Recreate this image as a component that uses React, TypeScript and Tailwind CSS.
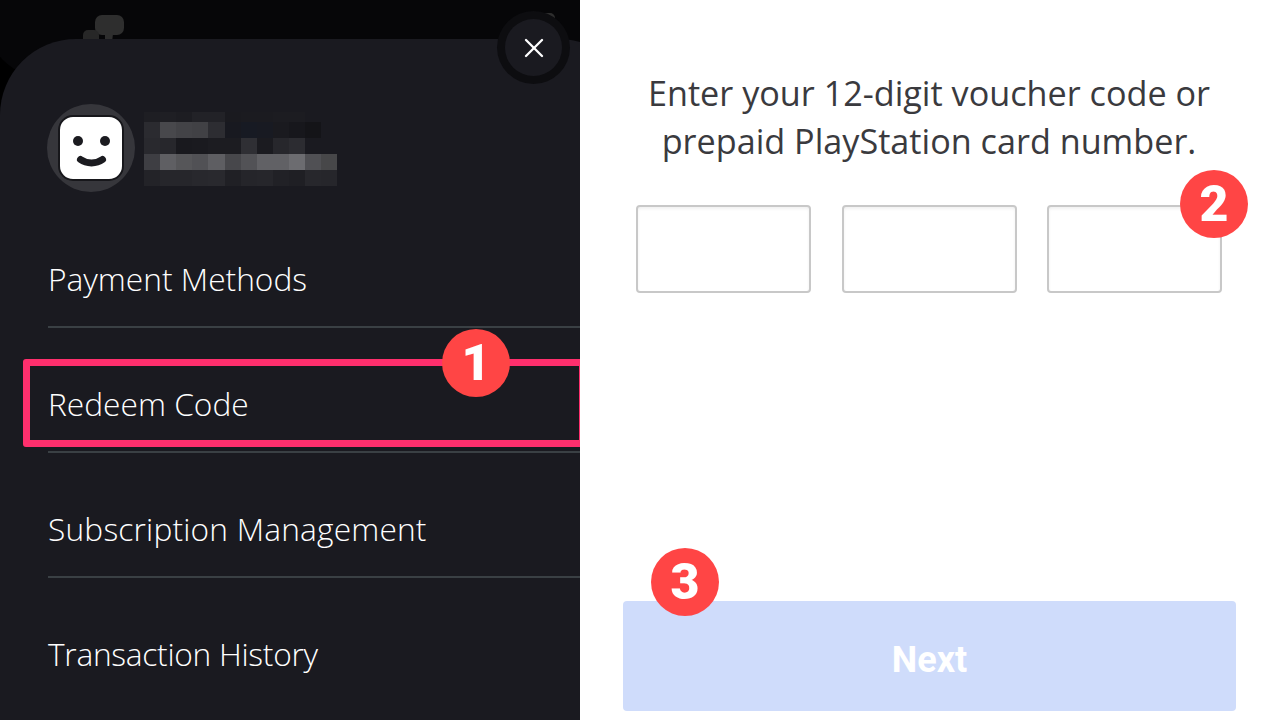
import { X } from 'lucide-react';

const mosaic = [
  ['#1e1e23', '#1f1f24', '#1d1d22', '#222227', '#222227', '#1a1a1f', '#1b1b20', '#1b1b20', '#1c1c21', '#1c1c21', '#1a1a20', '#1a1a20'],
  ['#2b2b30', '#48484c', '#434347', '#414145', '#2d2d32', '#181920', '#171a23', '#181a22', '#1a1a1f', '#17171c', '#141418', '#1a1a20'],
  ['#29292e', '#27272c', '#19191e', '#1a1a1f', '#1c1c21', '#1c1c21', '#2f2f34', '#1b1b20', '#27272c', '#2c2c31', '#1a1a20', '#1a1a20'],
  ['#3e3e43', '#5f5f63', '#565659', '#515155', '#5e5e62', '#47474b', '#525256', '#616165', '#616165', '#6c6c70', '#505054', '#474749'],
  ['#232328', '#26262b', '#26262b', '#28282d', '#29292e', '#202025', '#25252a', '#26262b', '#212126', '#1f1f24', '#27272c', '#26262b'],
];

function Badge({ n, className }: { n: number; className: string }) {
  return (
    <div className={`absolute w-[68px] h-[68px] rounded-full bg-[#ff4545] text-white flex items-center justify-center font-['Roboto',sans-serif] font-black text-[50px] leading-none ${className}`}>
      {n}
    </div>
  );
}

function MenuItem({ label, divider = true, className = '' }: { label: string; divider?: boolean; className?: string }) {
  return (
    <div className={`h-[125px] flex items-center ml-[48px] pt-[29px] text-[31.7px] font-light text-white ${divider ? 'border-b-2 border-[#3a4044]' : ''} ${className}`}>
      {label}
    </div>
  );
}

export default function App() {
  return (
    <div className="w-[1280px] h-[720px] flex overflow-hidden bg-white font-['Open_Sans',sans-serif]">
      <div className="relative w-[580px] h-full bg-black overflow-hidden pt-[39px]">
        {/* things peeking out behind the sheet */}
        <div className="absolute -left-[18px] -top-[60px] w-[700px] h-[140px] rounded-bl-[70px] bg-[#060608]" />
        <svg className="absolute left-[78px] top-[12px]" width="50" height="30" viewBox="0 0 50 30" fill="#2e2e2e">
          <rect x="17" y="3" width="29" height="20" rx="7" />
          <rect x="5" y="18" width="16" height="14" rx="5" fill="#272727" />
          <path d="M27 22h8l-1 8h-7z" />
        </svg>
        <div className="absolute left-[532px] top-[13px] w-[23px] h-[26px] rounded-[5px] bg-[#2e2e2e]" />

        <div className="relative w-[635px] h-[720px] bg-[#1a1a20] rounded-t-[76px] pt-[65px]">
          <div className="flex items-start h-[88px] ml-[47px]">
            <div className="w-[88px] h-[88px] rounded-full bg-[#36363b] flex items-center justify-center">
              <svg width="66" height="66" viewBox="0 0 66 66">
                <rect x="1" y="1" width="64" height="64" rx="14" fill="#fff" stroke="#17171b" strokeWidth="2" />
                <circle cx="20" cy="26" r="5" fill="#1b1b20" />
                <circle cx="47" cy="26" r="5" fill="#1b1b20" />
                <path d="M22.500 44.500c6 4.500 16 4.500 22 0" fill="none" stroke="#1b1b20" strokeWidth="7" strokeLinecap="round" />
              </svg>
            </div>
            <svg className="ml-[9px] mt-[8px]" width="193" height="75" viewBox="0 6 193 75" shapeRendering="crispEdges">
              {mosaic.map((row, r) =>
                row.map((c, i) => <rect key={`${r}-${i}`} x={i * 16.1} y={r * 16} width="16.1" height="16" fill={c} />)
              )}
            </svg>
          </div>

          <div className="mt-[11px]">
            <MenuItem label="Payment Methods" />
            <MenuItem label="Redeem Code" />
            <MenuItem label="Subscription Management" className="tracking-[0.18px]" />
            <MenuItem label="Transaction History" divider={false} className="tracking-[-0.28px] -translate-y-[1px]" />
          </div>

          {/* highlight around Redeem Code */}
          <div className="absolute left-[23px] top-[320px] w-[563px] h-[88px] border-[7px] border-[#ff2f6d] rounded-[3px]" />
        </div>

        <div className="absolute left-[497px] top-[11px] w-[73px] h-[73px] rounded-full bg-[#0d0d10] flex items-center justify-center">
          <div className="w-[57px] h-[57px] rounded-full bg-[#1a1a20] flex items-center justify-center">
            <X size={32} strokeWidth={1.75} className="text-white" />
          </div>
        </div>
        <Badge n={1} className="left-[442px] top-[329px]" />
      </div>

      <div className="relative flex-1 flex flex-col">
        <p className="mt-[69px] -ml-[2px] text-center text-[#3a3a3e] text-[34.2px] leading-[48px] font-normal">
          Enter your 12-digit voucher code or
          <br />
          prepaid PlayStation card number.
        </p>
        <div className="mt-[40px] ml-[56px] flex gap-[30.5px]">
          <div className="w-[175px] h-[88px] rounded-[4px] border-2 border-[#c8c8c8] shadow-[inset_0_2px_3px_rgba(0,0,0,0.06)]" />
          <div className="w-[175px] h-[88px] rounded-[4px] border-2 border-[#c8c8c8] shadow-[inset_0_2px_3px_rgba(0,0,0,0.06)]" />
          <div className="w-[175px] h-[88px] rounded-[4px] border-2 border-[#c8c8c8] shadow-[inset_0_2px_3px_rgba(0,0,0,0.06)]" />
        </div>
        <button className="mt-[308px] ml-[43px] w-[613px] h-[110px] rounded-[4px] bg-[#cfdcfb] text-white text-[36px] font-bold font-['Roboto',sans-serif] flex items-center justify-center pt-[8px]">
          Next
        </button>
        <Badge n={2} className="left-[600px] top-[170px]" />
        <Badge n={3} className="left-[71px] top-[548px]" />
      </div>
    </div>
  );
}
